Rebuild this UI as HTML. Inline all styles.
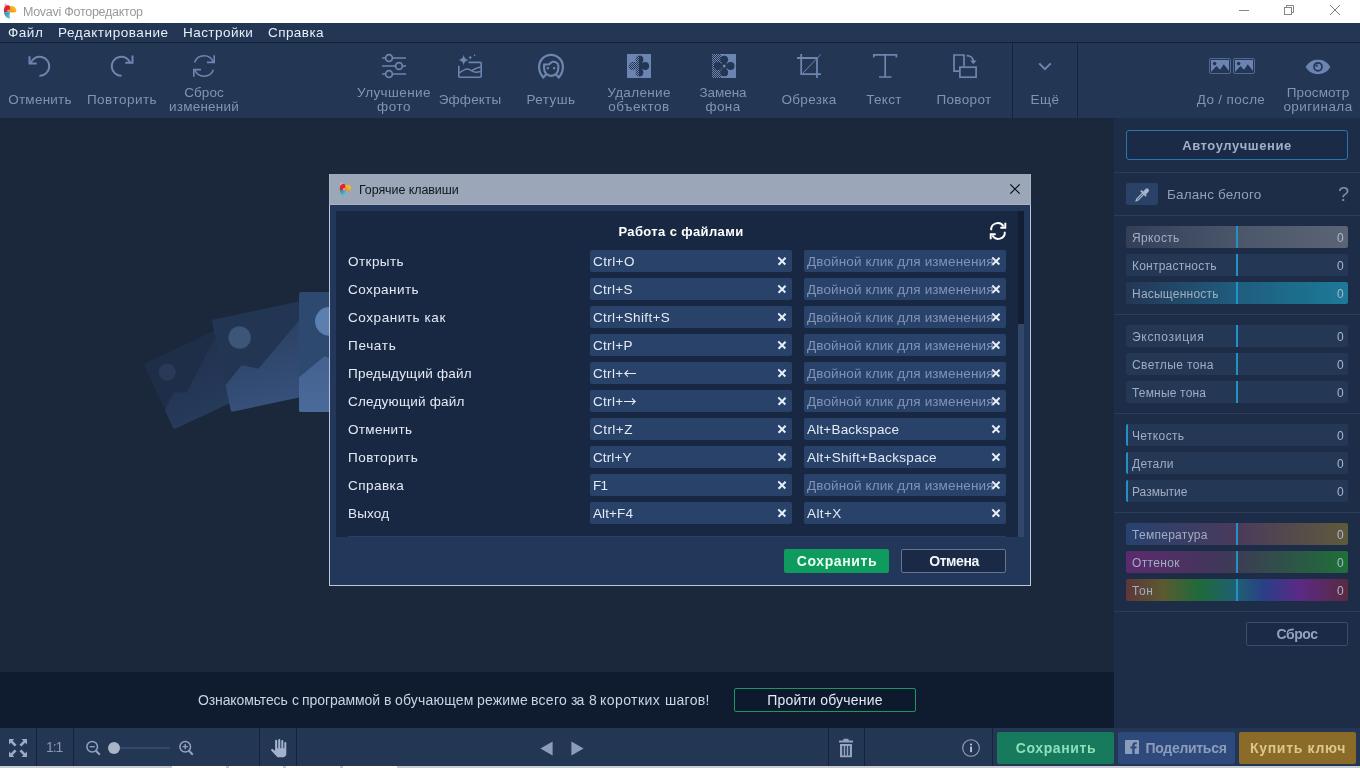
<!DOCTYPE html>
<html lang="ru">
<head>
<meta charset="utf-8">
<title>Movavi Фоторедактор</title>
<style>
*{box-sizing:border-box;margin:0;padding:0}
html,body{width:1360px;height:768px;overflow:hidden;background:#1b273a;font-family:"Liberation Sans",sans-serif;font-size:13px;color:#dfe6f2}
.a{position:absolute}
.t{position:absolute;white-space:nowrap;line-height:16px;will-change:transform}
svg{position:absolute;overflow:visible}
/* title */
#titlebar{left:0;top:0;width:1360px;height:23px;background:#fff}
#titlebar .t{color:#999;font-size:12.5px;left:23px;top:4px}
/* menu */
#menubar{left:0;top:23px;width:1360px;height:19px;background:#233654}
#menubar .t{color:#e8eef8;font-size:13.5px;top:2px;letter-spacing:.45px}
#menuline{left:0;top:42px;width:1360px;height:1px;background:#131f36}
/* toolbar */
#toolbar{left:0;top:43px;width:1360px;height:75px;background:#233654}
.tl{will-change:transform;position:absolute;white-space:nowrap;line-height:14px;text-align:center;color:#8194b4;font-size:13.5px;letter-spacing:.5px;transform:translateX(-50%)}
.vsep{position:absolute;width:1px;background:#16233c}
/* canvas */
#canvas{left:0;top:118px;width:1114px;height:554px;background:#1b273a;overflow:hidden}
#tutor{left:0;top:672px;width:1114px;height:56px;background:#0f1c30}
/* right panel */
#panel{left:1114px;top:118px;width:246px;height:610px;background:#1d2c47}
.hsep{position:absolute;left:0;width:246px;height:1px;background:#2a3d5e}
.sl{position:absolute;left:12px;width:222px;height:22px;background:#243755;border-radius:2px;overflow:hidden}
.sl .n{will-change:transform;position:absolute;left:6px;top:4px;line-height:16px;font-size:12px;color:#a0adc4;white-space:nowrap;letter-spacing:.35px}
.sl .v{will-change:transform;position:absolute;right:4px;top:4px;line-height:16px;font-size:12px;color:#a9b6cc}
.sl .m{position:absolute;top:0;width:2px;height:22px;background:#2292c6}
/* bottom */
#bottom{left:0;top:728px;width:1360px;height:38px;background:#233654}
#strip{left:0;top:766px;width:1360px;height:2px;background:#c9ccd2}
/* dialog */
#dlg{left:329px;top:174px;width:702px;height:412px;background:#22375a;border:1px solid #bcc6d6;border-top-color:#9ba6b8}
#dlgtitle{left:-1px;top:0;width:702px;height:30px;background:#9ba6b8;border-bottom:1px solid #a6b1c5;border-right:1px solid #a9b4c8;border-left:1px solid #a9b4c8}
#dlginner{left:6px;top:36px;width:682px;height:326px;background:#192842}
.rl{will-change:transform;position:absolute;left:18px;white-space:nowrap;line-height:16px;font-size:13.5px;color:#e4eaf4;letter-spacing:.45px}
.f{position:absolute;height:22px;width:202px;background:#28426a;border-radius:2px;overflow:hidden}
.f span{will-change:transform;position:absolute;left:3px;top:4px;white-space:nowrap;line-height:16px;font-size:13.5px;color:#e4eaf4;letter-spacing:.3px}
.f span.ph{color:#8194b4;letter-spacing:.45px}
.f i{position:absolute;left:188px;top:7px;width:8px;height:8px}
.f i:before,.f i:after{content:"";position:absolute;left:3.3px;top:-1.2px;width:1.55px;height:10.4px;background:#e8eef8;transform:rotate(45deg)}
.f i:after{transform:rotate(-45deg)}
</style>
</head>
<body>
<div id="titlebar" class="a">
<svg style="left:3px;top:3px" width="17" height="17" viewBox="0 0 17 17"><defs><linearGradient id="bk" x1="0" y1="1" x2="1" y2="0"><stop offset="0" stop-color="#f08a1e"/><stop offset="1" stop-color="#fbd21e"/></linearGradient><linearGradient id="bd" x1="0" y1="0" x2="1" y2="1"><stop offset="0" stop-color="#1f86b0"/><stop offset="1" stop-color="#63d6cf"/></linearGradient></defs><path d="M1.100 3.200L2.300 .1l2.100 2.500z" fill="#f3a3bd"/><path d="M1 9.300C.5 6 1.200 3.400 3.400 2.500c1.600-.5 3.200 0 3.700 1.100l.1 5.700z" fill="#d8283a"/><path d="M6.900 3.400c2.200-1 5.200 0 6.300 3 .5 1.700-.4 3.100-2.200 3.100l-4.100-.2z" fill="url(#bk)"/><path d="M1 9.300h6.100c-.5 1.800-.7 3.600-.1 6.400C4 15.400 1.200 13.100 1 9.300z" fill="url(#bd)"/><circle cx="5.600" cy="8" r="1.150" fill="#f8ead0"/><circle cx="5.500" cy="7.900" r=".5" fill="#4a2a14"/></svg>
<div class="t" style="letter-spacing:-0.26px">Movavi Фоторедактор</div>
<svg style="left:1239px;top:5px" width="10" height="10" viewBox="0 0 10 10"><path d="M0 5.500h10" stroke="#858585" stroke-width="1"/></svg>
<svg style="left:1284px;top:5px" width="10" height="10" viewBox="0 0 10 10" fill="none" stroke="#858585" stroke-width="1"><rect x=".5" y="2.500" width="7" height="7"/><path d="M2.500 2.500V.5h7v7h-2"/></svg>
<svg style="left:1330px;top:5px" width="10" height="10" viewBox="0 0 10 10"><path d="M0 0l10 10M10 0L0 10" stroke="#7a7a7a" stroke-width="1"/></svg>
</div>
<div id="menubar" class="a">
<div class="t" style="left:8px;letter-spacing:0.53px">Файл</div>
<div class="t" style="left:58px;letter-spacing:0.55px">Редактирование</div>
<div class="t" style="left:183px;letter-spacing:0.45px">Настройки</div>
<div class="t" style="left:268px;letter-spacing:0.43px">Справка</div>
</div>
<div id="menuline" class="a"></div>
<div id="toolbar" class="a">
<svg style="left:28px;top:12px" width="24" height="24" viewBox="0 0 24 24" fill="none" stroke="#6d86b0" ><path d="M2.600 8.100A9.600 9.600 0 1 1 11.400 20.850" stroke-width="2"/><path d="M1.500 1.200v7.300h7.200" stroke-width="2"/></svg>
<div class="tl" style="left:39.5px;top:50px;letter-spacing:0.24px">Отменить</div>
<svg style="left:110px;top:12px" width="24" height="24" viewBox="0 0 24 24" fill="none" stroke="#6d86b0" ><path d="M20.400 8.100A9.600 9.600 0 1 0 11.600 20.850" stroke-width="2"/><path d="M22.500 .4v7.300h-7.200" stroke-width="2"/></svg>
<div class="tl" style="left:121.5px;top:50px;letter-spacing:0.47px">Повторить</div>
<svg style="left:193px;top:12px" width="22" height="22" viewBox="0 0 22 22" fill="none" stroke="#6d86b0" ><path d="M1.6 7.4A10 10 0 0 1 20.4 7.2" stroke-width="1.6"/><path d="M20.4 14.8A10 10 0 0 1 1.8 15" stroke-width="1.6"/><path d="M21.2 .2v7.2h-7.2M.8 21.8v-7.2h7.2" stroke-width="1.6"/></svg>
<div class="tl" style="left:204px;top:43px;letter-spacing:0.06px">Сброс</div>
<div class="tl" style="left:204px;top:57px;letter-spacing:0.23px">изменений</div>
<svg style="left:382px;top:11px" width="24" height="24" viewBox="0 0 24 24" fill="none" stroke="#6d86b0" ><path d="M0 4h3.4M10.6 4H24M0 12h13.4M20.6 12H24M0 20h3.4M10.6 20H24" stroke-width="1.7"/><circle cx="7" cy="4" r="3.4" stroke-width="1.7"/><circle cx="17" cy="12" r="3.4" stroke-width="1.7"/><circle cx="7" cy="20" r="3.4" stroke-width="1.7"/></svg>
<div class="tl" style="left:393.7px;top:43px;letter-spacing:0.4px">Улучшение</div>
<div class="tl" style="left:393.7px;top:57px;letter-spacing:0.55px">фото</div>
<svg style="left:458px;top:11px" width="24" height="24" viewBox="0 0 24 24" fill="none" stroke="#6d86b0" ><path d="M10.6 8.4H22a1.2 1.2 0 0 1 1.2 1.2V22a1.2 1.2 0 0 1-1.2 1.2H2A1.2 1.2 0 0 1 .8 22V11.8" stroke-width="1.6"/><path d="M1.2 19c2.6-1.8 5.4-4 8-4 3.4 0 5 3.2 8.6 3.2 2 0 3.8-.4 5-.8M13.6 16.8c2.6-1.6 5.6-3.4 9.2-3.8" stroke-width="1.4"/><path d="M5.6 .8c.5 3 1.8 4.6 5 5.3-3.200 .7-4.500 2.300-5 5.300-.5-3-1.800-4.600-5-5.300 3.200-.7 4.500-2.300 5-5.300z" fill="#6d86b0" stroke="none"/><path d="M12.300 1.200c.2 1.300 .8 2 2.200 2.300-1.400 .3-2 1-2.200 2.300-.2-1.300-.8-2-2.200-2.300 1.400-.3 2-1 2.200-2.300z" fill="#6d86b0" stroke="none"/><circle cx="16.6" cy="1.400" r=".8" fill="#6d86b0" stroke="none"/></svg>
<div class="tl" style="left:469.8px;top:50px;letter-spacing:0.19px">Эффекты</div>
<svg style="left:538px;top:11px" width="26" height="24" viewBox="0 0 26 24" fill="none" stroke="#6d86b0" stroke-linejoin="miter" stroke-miterlimit="6"><path d="M8 20.600L5.300 23.400C2.600 20.600 1.100 17 1.100 12.800a11.900 11.900 0 0 1 23.800 0c0 4.200-1.500 7.800-4.200 10.600L18 20.600" stroke-width="2.200"/><path d="M6.100 10.500V14.600a7.100 7.300 0 0 0 14.200 0V10.800" stroke-width="2.100"/><path d="M5.100 10.500H10c1.900 0 2.500-2.200 4.200-2.600 2.400-.5 4.900 .6 6.100 2.900" stroke-width="2.100"/><rect x="8.800" y="13.100" width="2.200" height="2.100" fill="#6d86b0" stroke="none"/><rect x="15" y="13.100" width="2.200" height="2.100" fill="#6d86b0" stroke="none"/></svg>
<div class="tl" style="left:551px;top:50px;letter-spacing:0.44px">Ретушь</div>
<svg style="left:627px;top:11px" width="24" height="24" viewBox="0 0 24 24"><defs><pattern id="dk" width="2" height="2" patternUnits="userSpaceOnUse"><rect width="1" height="1" fill="#233654"/><rect x="1" y="1" width="1" height="1" fill="#233654"/></pattern><pattern id="lt" width="2" height="2" patternUnits="userSpaceOnUse"><rect width="1" height="1" fill="#6c84b2"/><rect x="1" y="1" width="1" height="1" fill="#6c84b2"/></pattern></defs><rect width="24" height="24" fill="#6c84b2"/><circle cx="12.400" cy="5.500" r="3.900" fill="#233654"/><circle cx="18.200" cy="12" r="3.900" fill="#233654"/><circle cx="12.400" cy="18.500" r="3.900" fill="#233654"/><circle cx="6" cy="12" r="4.300" fill="#233654"/><path d="M9 7h6v10H9z" fill="#233654"/><rect x="0" y="0" width="12" height="24" fill="url(#lt)" shape-rendering="crispEdges"/></svg>
<div class="tl" style="left:638.5px;top:43px;letter-spacing:0.33px">Удаление</div>
<div class="tl" style="left:638.5px;top:57px;letter-spacing:0.48px">объектов</div>
<svg style="left:712px;top:11px" width="24" height="24" viewBox="0 0 24 24" shape-rendering="crispEdges"><rect x="9" width="15" height="24" fill="#6c84b2"/><path d="M0 0h12l-1 24H0z" fill="url(#lt)"/><g shape-rendering="auto"><circle cx="12.200" cy="5.600" r="3.900" fill="#233654"/><circle cx="5.800" cy="12" r="3.900" fill="#233654"/><circle cx="18.600" cy="12" r="3.900" fill="#233654"/><circle cx="12.200" cy="18.400" r="3.900" fill="#233654"/><circle cx="12.200" cy="12" r="3.400" fill="#233654"/><circle cx="12.200" cy="12" r="1.500" fill="#6c84b2"/></g></svg>
<div class="tl" style="left:723.3px;top:43px;letter-spacing:-0.04px">Замена</div>
<div class="tl" style="left:723.3px;top:57px;letter-spacing:0.4px">фона</div>
<svg style="left:797px;top:11px" width="24" height="24" viewBox="0 0 24 24" fill="none" stroke="#6d86b0" ><path d="M4.200 0v20.200H24M0 4h20v20" stroke-width="1.800"/><path d="M6 19L23.800 .4" stroke-width="1"/></svg>
<div class="tl" style="left:808.5px;top:50px;letter-spacing:0.32px">Обрезка</div>
<svg style="left:873px;top:11px" width="24" height="24" viewBox="0 0 24 24" fill="none" stroke="#6d86b0" ><path d="M.8 3.400V.9h22.600v2.500M12.200 .9v22M6 23h12.400" stroke-width="1.700"/></svg>
<div class="tl" style="left:884.2px;top:50px;letter-spacing:0.3px">Текст</div>
<svg style="left:953px;top:11px" width="24" height="24" viewBox="0 0 24 24" fill="none" stroke="#6d86b0" ><path d="M6.600 17.200H1V1h10v11.400" stroke-width="1.700"/><rect x="6.900" y="13.200" width="16.200" height="10" stroke-width="1.700"/><path d="M13.600 1.600c4.200 0 6.400 2.400 6.800 6" stroke-width="1.600"/><path d="M17.200 6.400h6.400l-3.200 3.800z" fill="#6d86b0" stroke="none"/></svg>
<div class="tl" style="left:964.4px;top:50px;letter-spacing:0.36px">Поворот</div>
<div class="vsep" style="left:1012px;top:0;height:75px"></div>
<svg style="left:1038px;top:18px" width="14" height="10" viewBox="0 0 14 10" fill="none" stroke="#6d86b0" ><path d="M1.200 2.400L7 8.200l5.800-5.800" stroke-width="2"/></svg>
<div class="tl" style="left:1045px;top:50px;letter-spacing:0.44px">Ещё</div>
<div class="vsep" style="left:1077px;top:0;height:75px"></div>
<svg style="left:1209px;top:15px" width="22" height="16" viewBox="0 0 22 16"><rect x=".5" y=".5" width="21" height="15" rx="1.500" fill="none" stroke="#53698f"/><rect x="2" y="2" width="18" height="12" fill="#6c84b2"/><circle cx="5.600" cy="5.600" r="1.800" fill="#233654"/><path d="M2 14l5.400-6 3.600 3.800 3.800-5.600L20 13v1z" fill="#233654"/></svg>
<svg style="left:1233px;top:15px" width="22" height="16" viewBox="0 0 22 16"><rect x=".5" y=".5" width="21" height="15" rx="1.500" fill="none" stroke="#53698f"/><rect x="2" y="2" width="18" height="12" fill="#6c84b2"/><circle cx="5.600" cy="5.600" r="1.800" fill="#233654"/><path d="M2 14l5.400-6 3.600 3.800 3.800-5.600L20 13v1z" fill="#233654"/></svg>
<div class="tl" style="left:1231.3px;top:50px;letter-spacing:0.34px">До / после</div>
<svg style="left:1305px;top:16px" width="26" height="16" viewBox="0 0 26 16"><path d="M.6 8C4 2.600 8.400 .8 13 .8S22 2.600 25.400 8C22 13.400 17.600 15.200 13 15.200S4 13.400 .6 8z" fill="#6c84b2"/><circle cx="13" cy="7.800" r="4" fill="none" stroke="#233654" stroke-width="1.700"/><circle cx="11.700" cy="6.600" r="1.200" fill="#233654"/></svg>
<div class="tl" style="left:1317.5px;top:43px;letter-spacing:0.11px">Просмотр</div>
<div class="tl" style="left:1317.5px;top:57px;letter-spacing:0.43px">оригинала</div>
</div>
<div id="canvas" class="a">
<svg width="0" height="0"><defs><linearGradient id="m1" x1="0" y1="0" x2="0" y2="1"><stop offset="0" stop-color="#22324f"/><stop offset="1" stop-color="#263a5a"/></linearGradient><linearGradient id="m2" x1="0" y1="0" x2="0" y2="1"><stop offset="0" stop-color="#2b4060"/><stop offset="1" stop-color="#36507a"/></linearGradient><linearGradient id="m3" x1="0" y1="0" x2="0" y2="1"><stop offset="0" stop-color="#3d5a86"/><stop offset="1" stop-color="#4a6a9a"/></linearGradient></defs></svg>
<svg style="left:154.2px;top:221.9px;transform:rotate(-25deg)" width="96.5" height="72.4" viewBox="0 0 96.5 72.4"><rect width="96.5" height="72.4" rx="2" fill="#1e2d48"/><circle cx="18.3" cy="17.7" r="8.6" fill="#293a58"/><path d="M0 51.4L15.4 38.8L27.5 44.2L77.2 5.8L96.5 19.5V70.4a2 2 0 0 1-2 2H2a2 2 0 0 1-2-2z" fill="url(#m1)"/></svg>
<svg style="left:220.3px;top:187.7px;transform:rotate(-12deg)" width="125" height="94" viewBox="0 0 125 94"><rect width="125" height="94" rx="2" fill="#223553"/><circle cx="23.8" cy="23.0" r="11.2" fill="#3d5577"/><path d="M0 66.7L20.0 50.4L35.6 57.3L100.0 7.5L125 25.4V92a2 2 0 0 1-2 2H2a2 2 0 0 1-2-2z" fill="url(#m2)"/></svg>
<svg style="left:299.3px;top:174.4px;transform:rotate(0deg)" width="160" height="120" viewBox="0 0 160 120"><rect width="160" height="120" rx="2" fill="#2e496f"/><circle cx="30.4" cy="29.4" r="14.3" fill="#5b80b0"/><path d="M0 85.2L25.6 64.3L45.6 73.2L128.0 9.6L160 32.4V118a2 2 0 0 1-2 2H2a2 2 0 0 1-2-2z" fill="url(#m3)"/></svg>
</div>
<div id="tutor" class="a">
<div class="t" style="left:197.9px;top:20px;font-size:14px;color:#c9d3e4;letter-spacing:-0.12px">Ознакомьтесь</div>
<div class="t" style="left:292.0px;top:20px;font-size:14px;color:#c9d3e4">с</div>
<div class="t" style="left:301.5px;top:20px;font-size:14px;color:#c9d3e4;letter-spacing:-0.07px">программой</div>
<div class="t" style="left:384.0px;top:20px;font-size:14px;color:#c9d3e4">в</div>
<div class="t" style="left:394.6px;top:20px;font-size:14px;color:#c9d3e4;letter-spacing:0.18px">обучающем</div>
<div class="t" style="left:477.0px;top:20px;font-size:14px;color:#c9d3e4;letter-spacing:0.16px">режиме</div>
<div class="t" style="left:531.4px;top:20px;font-size:14px;color:#c9d3e4;letter-spacing:0.29px">всего</div>
<div class="t" style="left:571.3px;top:20px;font-size:14px;color:#c9d3e4;letter-spacing:-0.92px">за</div>
<div class="t" style="left:589.0px;top:20px;font-size:14px;color:#c9d3e4">8</div>
<div class="t" style="left:600.4px;top:20px;font-size:14px;color:#c9d3e4;letter-spacing:0.44px">коротких</div>
<div class="t" style="left:664.9px;top:20px;font-size:14px;color:#c9d3e4;letter-spacing:0.27px">шагов!</div>
<div class="a" style="left:734px;top:16px;width:182px;height:24px;border:1px solid #1f9560;border-radius:2px;background:#0d1a2d"></div>
<div class="t" style="left:824.500px;top:20px;transform:translateX(-50%);font-size:14px;color:#e4eaf4;letter-spacing:0.2px">Пройти обучение</div>
</div>
<div id="panel" class="a">
<div class="a" style="left:12px;top:12px;width:222px;height:30px;border:1px solid #2678a8;border-radius:3px;background:#1a2a47"></div>
<div class="t" style="left:123px;top:20px;transform:translateX(-50%);font-weight:bold;font-size:13px;color:#a3afc6;letter-spacing:0.57px">Автоулучшение</div>
<div class="hsep" style="top:54px"></div>
<div class="a" style="left:12px;top:65px;width:32px;height:22px;background:#2a4268;border-radius:2px"></div>
<svg style="left:21px;top:69px" width="14" height="15" viewBox="0 0 14 15"><path d="M.2 14.700l.9-3L7.300 5.500l2.100 2.100-6.200 6.200z" fill="#a9b6cc"/><path d="M2.300 12.600l5.400-5.400" stroke="#2a4268" stroke-width=".9"/><path d="M5.900 3.700l5.300 5.300" stroke="#a9b6cc" stroke-width="1.900"/><path d="M8 4.700l2.500-2.600a2 2 0 0 1 2.900 2.800l-2.700 2.500z" fill="#a9b6cc"/></svg>
<div class="t" style="left:53px;top:69px;font-size:13.5px;color:#8fa0bd;letter-spacing:0.19px">Баланс белого</div>
<div class="t" style="left:224px;top:66px;font-size:20px;line-height:20px;color:#7f8fab">?</div>
<div class="hsep" style="top:97px"></div>
<div class="sl" style="top:108px;background:linear-gradient(90deg,#323f57 0%,#4d586c 55%,#5b6475 100%)"><div class="m" style="left:110px"></div><div class="n" style="letter-spacing:0.37px">Яркость</div><div class="v">0</div></div>
<div class="sl" style="top:136px;"><div class="m" style="left:110px"></div><div class="n" style="letter-spacing:0.23px">Контрастность</div><div class="v">0</div></div>
<div class="sl" style="top:164px;background:linear-gradient(90deg,#243755 0%,#1f5d7e 50%,#1c7a98 100%)"><div class="m" style="left:110px"></div><div class="n" style="letter-spacing:0.22px">Насыщенность</div><div class="v">0</div></div>
<div class="hsep" style="top:196px"></div>
<div class="sl" style="top:207px;"><div class="m" style="left:110px"></div><div class="n" style="letter-spacing:0.7px">Экспозиция</div><div class="v">0</div></div>
<div class="sl" style="top:235px;"><div class="m" style="left:110px"></div><div class="n" style="letter-spacing:0.36px">Светлые тона</div><div class="v">0</div></div>
<div class="sl" style="top:263px;"><div class="m" style="left:110px"></div><div class="n" style="letter-spacing:0.18px">Темные тона</div><div class="v">0</div></div>
<div class="hsep" style="top:295px"></div>
<div class="sl" style="top:306px;"><div class="m" style="left:0px"></div><div class="n" style="letter-spacing:0.36px">Четкость</div><div class="v">0</div></div>
<div class="sl" style="top:334px;"><div class="m" style="left:0px"></div><div class="n" style="letter-spacing:0.25px">Детали</div><div class="v">0</div></div>
<div class="sl" style="top:362px;"><div class="m" style="left:0px"></div><div class="n" style="letter-spacing:-0.0px">Размытие</div><div class="v">0</div></div>
<div class="hsep" style="top:394px"></div>
<div class="sl" style="top:405px;background:linear-gradient(90deg,#27426f 0%,#4a3a5c 50%,#5f5a3c 100%)"><div class="m" style="left:110px"></div><div class="n" style="letter-spacing:0.28px">Температура</div><div class="v">0</div></div>
<div class="sl" style="top:433px;background:linear-gradient(90deg,#5c2a6e 0%,#3f3858 45%,#2a5a44 80%,#1f7038 100%)"><div class="m" style="left:110px"></div><div class="n" style="letter-spacing:0.35px">Оттенок</div><div class="v">0</div></div>
<div class="sl" style="top:461px;background:linear-gradient(90deg,#5f3638 0%,#5a5a30 17%,#1f6a3a 33%,#1f5f74 50%,#2a3f86 62%,#5a2a86 78%,#5a2a40 100%)"><div class="m" style="left:110px"></div><div class="n" style="letter-spacing:0.6px">Тон</div><div class="v">0</div></div>
<div class="hsep" style="top:493px"></div>
<div class="a" style="left:132px;top:504px;width:102px;height:24px;border:1px solid #3a4c6c;border-radius:2px;background:#1b2a46"></div>
<div class="t" style="left:183px;top:508px;transform:translateX(-50%);font-weight:bold;font-size:14px;color:#93a1bb;letter-spacing:-0.47px">Сброс</div>
</div>
<div id="bottom" class="a">
<svg style="left:9px;top:11px" width="18" height="18" viewBox="0 0 18 18" fill="#9aabc8"><path d="M0 0h5.400L0 5.400zM18 0v5.400L12.600 0zM0 18v-5.400L5.400 18zM18 18h-5.400L18 12.600z"/><path d="M1.600 1.600l5 5M16.400 1.600l-5 5M1.600 16.400l5-5M16.400 16.400l-5-5" stroke="#9aabc8" stroke-width="2.700" fill="none"/></svg>
<div class="vsep" style="left:36px;top:0;height:38px"></div>
<div class="vsep" style="left:73px;top:0;height:38px"></div>
<div class="vsep" style="left:259px;top:0;height:38px"></div>
<div class="vsep" style="left:296px;top:0;height:38px"></div>
<div class="vsep" style="left:828px;top:0;height:38px"></div>
<div class="vsep" style="left:864px;top:0;height:38px"></div>
<div class="vsep" style="left:992px;top:0;height:38px"></div>
<div class="t" style="left:46px;top:11px;font-size:14px;color:#8797b5;letter-spacing:-1.08px">1:1</div>
<svg style="left:86px;top:12px" width="16" height="16" viewBox="0 0 16 16" fill="none" stroke="#93a4c2"><circle cx="6.200" cy="6.700" r="5.300" stroke-width="1.500"/><path d="M10 10.800l3.800 4" stroke-width="2"/><path d="M3.600 6.700h5.200" stroke-width="1.300"/></svg>
<div class="a" style="left:120px;top:19px;width:50px;height:2px;background:#34496b"></div>
<div class="a" style="left:108px;top:14px;width:12px;height:12px;border-radius:6px;background:#a9b4c8"></div>
<svg style="left:179px;top:12px" width="16" height="16" viewBox="0 0 16 16" fill="none" stroke="#93a4c2"><circle cx="6.200" cy="6.700" r="5.300" stroke-width="1.500"/><path d="M10 10.800l3.800 4" stroke-width="2"/><path d="M3.600 6.700h5.200M6.200 4.100v5.200" stroke-width="1.300"/></svg>
<svg style="left:271px;top:11px" width="16" height="19" viewBox="0 0 16 19" fill="#a3b2cc"><path d="M4.100 11.800V1.900a1.050 1.050 0 0 1 2.100 0V9.200h1V1a1.050 1.050 0 0 1 2.100 0v8.200h1V1.900a1 1 0 0 1 2 0v7.300h1V3.900a1 1 0 0 1 2 0V15.900L13 18.200H6.500L.4 11.700a1.050 1.050 0 0 1 1.500-1.500z"/></svg>
<svg style="left:540px;top:13px" width="13" height="15" viewBox="0 0 13 15"><path d="M12.600 .4v14.200L.4 7.500z" fill="#8c9dbb"/></svg>
<svg style="left:571px;top:13px" width="13" height="15" viewBox="0 0 13 15"><path d="M.4 .4v14.200l12.200-7.100z" fill="#8c9dbb"/></svg>
<svg style="left:839px;top:10px" width="14" height="20" viewBox="0 0 14 20" fill="#93a4c2"><path d="M4.400 .8h5.200v1.600H14v2.200H0V2.400h4.400z"/><path d="M1 6h12v13.200H1zM3.200 8v9.400h1.600V8zM6.200 8v9.400h1.600V8zM9.200 8v9.400h1.600V8z" fill-rule="evenodd"/></svg>
<svg style="left:962px;top:11px" width="18" height="18" viewBox="0 0 18 18" fill="none"><circle cx="9" cy="9" r="8.300" stroke="#93a4c2" stroke-width="1.100"/><rect x="8.200" y="7.600" width="1.700" height="5.600" fill="#c9d3e4"/><rect x="8.200" y="4.600" width="1.700" height="1.800" fill="#c9d3e4"/></svg>
<div class="a" style="left:997px;top:4px;width:117px;height:32px;background:#187a5d;border-radius:2px"></div>
<div class="t" style="left:1055.500px;top:12px;transform:translateX(-50%);font-weight:bold;font-size:14px;color:#8be0bb;letter-spacing:0.6px">Сохранить</div>
<div class="a" style="left:1118px;top:4px;width:117px;height:32px;background:#2e497b;border-radius:2px"></div>
<svg style="left:1125px;top:12px" width="14" height="14" viewBox="0 0 14 14"><rect width="14" height="14" rx="1" fill="#8c9dbb"/><path d="M9.600 14V8.600h1.800l.3-2.100H9.600V5.200c0-.6 .2-1 1-1h1.200V2.300c-.2 0-.9-.1-1.700-.1-1.700 0-2.800 1-2.800 2.900v1.400H5.400v2.100h1.900V14z" fill="#2e497b"/></svg>
<div class="t" style="left:1186px;top:12px;transform:translateX(-50%);font-weight:bold;font-size:14px;color:#8c9dbb;letter-spacing:-0.3px">Поделиться</div>
<div class="a" style="left:1239px;top:4px;width:117px;height:32px;background:#8a6c28;border-radius:2px"></div>
<div class="t" style="left:1297.500px;top:12px;transform:translateX(-50%);font-weight:bold;font-size:14px;color:#dcc78e;letter-spacing:0.69px">Купить ключ</div>
</div>
<div id="strip" class="a"><div class="a" style="left:172px;top:0;width:54px;height:2px;background:#fff"></div><div class="a" style="left:229px;top:0;width:54px;height:2px;background:#fff"></div><div class="a" style="left:286px;top:0;width:54px;height:2px;background:#fff"></div><div class="a" style="left:343px;top:0;width:54px;height:2px;background:#fff"></div></div>
<div id="dlg" class="a">
<div id="dlgtitle" class="a">
<svg style="left:9px;top:7px" width="15.500" height="15.500" viewBox="0 0 17 17"><defs><linearGradient id="bk2" x1="0" y1="1" x2="1" y2="0"><stop offset="0" stop-color="#f08a1e"/><stop offset="1" stop-color="#fbd21e"/></linearGradient><linearGradient id="bd2" x1="0" y1="0" x2="1" y2="1"><stop offset="0" stop-color="#1f86b0"/><stop offset="1" stop-color="#63d6cf"/></linearGradient></defs><path d="M1.100 3.200L2.300 .1l2.100 2.500z" fill="#f3a3bd"/><path d="M1 9.300C.5 6 1.200 3.400 3.400 2.500c1.600-.5 3.200 0 3.700 1.100l.1 5.700z" fill="#d8283a"/><path d="M6.900 3.400c2.200-1 5.200 0 6.300 3 .5 1.700-.4 3.100-2.200 3.100l-4.100-.2z" fill="url(#bk2)"/><path d="M1 9.300h6.100c-.5 1.800-.7 3.600-.1 6.400C4 15.400 1.200 13.100 1 9.300z" fill="url(#bd2)"/><circle cx="5.600" cy="8" r="1.150" fill="#f8ead0"/><circle cx="5.500" cy="7.900" r=".5" fill="#4a2a14"/></svg>
<div class="t" style="left:29px;top:7px;color:#101620;font-size:12.5px;letter-spacing:-0.09px">Горячие клавиши</div>
<svg style="left:680px;top:9px" width="10" height="10" viewBox="0 0 10 10"><path d="M.3.300l9.400 9.400M9.700.300L.3 9.700" stroke="#080c14" stroke-width="1.200" fill="none"/></svg>
</div>
<div id="dlginner" class="a"></div>
<div class="a" style="left:688px;top:36px;width:6px;height:326px;background:#33476a"></div>
<div class="a" style="left:688px;top:36px;width:6px;height:113px;background:#131d33"></div>
<div class="a" style="left:18px;top:361px;width:658px;height:1px;background:#2a3f63"></div>
<div class="t" style="left:350.5px;top:49px;transform:translateX(-50%);font-weight:bold;font-size:13px;color:#fff;letter-spacing:0.38px">Работа с файлами</div>
<svg style="left:659px;top:47px" width="18" height="18" viewBox="0 0 18 18" fill="none" stroke="#fff" stroke-width="1.9"><path d="M2.2 8.2A6.6 6.6 0 0 1 14.6 4.6"/><path d="M15.8 9.8A6.6 6.6 0 0 1 3.4 13.4"/><path d="M16.3 .8v5h-5" /><path d="M1.7 17.2v-5h5"/></svg>
<div class="rl" style="left:18px;top:79px;letter-spacing:0.44px">Открыть</div>
<div class="f" style="left:260px;top:75px"><span style="letter-spacing:0.4px">Ctrl+O</span><i></i></div>
<div class="f" style="left:474px;top:75px"><span class="ph" style="letter-spacing:0.13px">Двойной клик для изменения</span><i></i></div>
<div class="rl" style="left:18px;top:107px;letter-spacing:0.44px">Сохранить</div>
<div class="f" style="left:260px;top:103px"><span style="letter-spacing:0.3px">Ctrl+S</span><i></i></div>
<div class="f" style="left:474px;top:103px"><span class="ph" style="letter-spacing:0.13px">Двойной клик для изменения</span><i></i></div>
<div class="rl" style="left:18px;top:135px;letter-spacing:0.57px">Сохранить как</div>
<div class="f" style="left:260px;top:131px"><span style="letter-spacing:0.36px">Ctrl+Shift+S</span><i></i></div>
<div class="f" style="left:474px;top:131px"><span class="ph" style="letter-spacing:0.13px">Двойной клик для изменения</span><i></i></div>
<div class="rl" style="left:18px;top:163px;letter-spacing:0.69px">Печать</div>
<div class="f" style="left:260px;top:159px"><span style="letter-spacing:0.3px">Ctrl+P</span><i></i></div>
<div class="f" style="left:474px;top:159px"><span class="ph" style="letter-spacing:0.13px">Двойной клик для изменения</span><i></i></div>
<div class="rl" style="left:18px;top:191px;letter-spacing:0.21px">Предыдущий файл</div>
<div class="f" style="left:260px;top:187px"><span style="letter-spacing:.3px">Ctrl+</span><svg style="left:34px;top:7px" width="12" height="9" viewBox="0 0 12 9" fill="none" stroke="#e4eaf4" stroke-width="1.1"><path d="M.8 4.500H12M4 1.300L.8 4.500 4 7.700"/></svg><i></i></div>
<div class="f" style="left:474px;top:187px"><span class="ph" style="letter-spacing:0.13px">Двойной клик для изменения</span><i></i></div>
<div class="rl" style="left:18px;top:219px;letter-spacing:0.22px">Следующий файл</div>
<div class="f" style="left:260px;top:215px"><span style="letter-spacing:.3px">Ctrl+</span><svg style="left:34px;top:7px" width="12" height="9" viewBox="0 0 12 9" fill="none" stroke="#e4eaf4" stroke-width="1.1"><path d="M0 4.500h11.200M8 1.300l3.200 3.200L8 7.700"/></svg><i></i></div>
<div class="f" style="left:474px;top:215px"><span class="ph" style="letter-spacing:0.13px">Двойной клик для изменения</span><i></i></div>
<div class="rl" style="left:18px;top:247px;letter-spacing:0.33px">Отменить</div>
<div class="f" style="left:260px;top:243px"><span style="letter-spacing:0.45px">Ctrl+Z</span><i></i></div>
<div class="f" style="left:474px;top:243px"><span style="letter-spacing:0.2px">Alt+Backspace</span><i></i></div>
<div class="rl" style="left:18px;top:275px;letter-spacing:0.49px">Повторить</div>
<div class="f" style="left:260px;top:271px"><span style="letter-spacing:0.12px">Ctrl+Y</span><i></i></div>
<div class="f" style="left:474px;top:271px"><span style="letter-spacing:0.27px">Alt+Shift+Backspace</span><i></i></div>
<div class="rl" style="left:18px;top:303px;letter-spacing:0.46px">Справка</div>
<div class="f" style="left:260px;top:299px"><span style="letter-spacing:-0.67px">F1</span><i></i></div>
<div class="f" style="left:474px;top:299px"><span class="ph" style="letter-spacing:0.13px">Двойной клик для изменения</span><i></i></div>
<div class="rl" style="left:18px;top:331px;letter-spacing:0.17px">Выход</div>
<div class="f" style="left:260px;top:327px"><span style="letter-spacing:0.12px">Alt+F4</span><i></i></div>
<div class="f" style="left:474px;top:327px"><span style="letter-spacing:0.41px">Alt+X</span><i></i></div>
<div class="a" style="left:454px;top:374px;width:105px;height:24px;background:#0f9b5e;border-radius:2px"></div>
<div class="t" style="left:506.5px;top:378px;transform:translateX(-50%);font-weight:bold;font-size:14px;color:#e9fff4;letter-spacing:0.64px">Сохранить</div>
<div class="a" style="left:571px;top:374px;width:105px;height:24px;background:#1a2945;border:1px solid #65758f;border-radius:2px"></div>
<div class="t" style="left:623.5px;top:378px;transform:translateX(-50%);font-weight:bold;font-size:14px;color:#f2f5fa;letter-spacing:-0.43px">Отмена</div>
</div>
</body>
</html>
